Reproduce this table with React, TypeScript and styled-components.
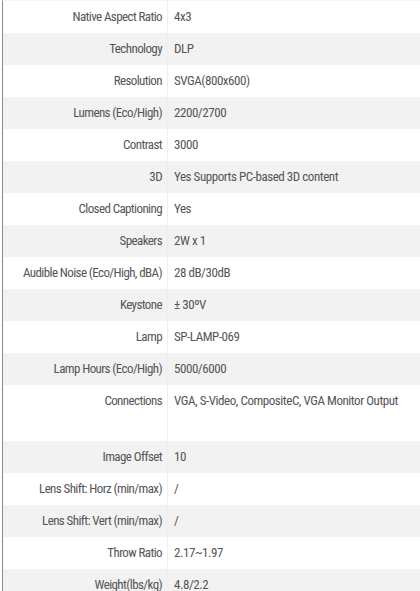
import React from "react";
import styled, { createGlobalStyle } from "styled-components";

const GlobalStyle = createGlobalStyle`
  body {
    margin: 0;
    background: #ffffff;
  }
`;

const specs: [string, string][] = [
  ["Native Aspect Ratio", "4x3"],
  ["Technology", "DLP"],
  ["Resolution", "SVGA(800x600)"],
  ["Lumens (Eco/High)", "2200/2700"],
  ["Contrast", "3000"],
  ["3D", "Yes Supports PC-based 3D content"],
  ["Closed Captioning", "Yes"],
  ["Speakers", "2W x 1"],
  ["Audible Noise (Eco/High, dBA)", "28 dB/30dB"],
  ["Keystone", "± 30ºV"],
  ["Lamp", "SP-LAMP-069"],
  ["Lamp Hours (Eco/High)", "5000/6000"],
  ["Connections", "VGA, S-Video, CompositeC, VGA Monitor Output"],
  ["Image Offset", "10"],
  ["Lens Shift: Horz (min/max)", "/"],
  ["Lens Shift: Vert (min/max)", "/"],
  ["Throw Ratio", "2.17~1.97"],
  ["Weight(lbs/kg)", "4.8/2.2"],
];

// no narrow face installed, so Roboto is tightened to the condensed widths
const Panel = styled.div`
  margin-left: 2px;
  border-left: 1px solid #8a8a8a;
  border-top: 1px solid #f4f4f4;
  font-family: "Roboto Condensed", Roboto, "Liberation Sans", sans-serif;
  font-size: 13px;
  color: #555555;
`;

const Row = styled.div<{ $shaded: boolean; $tall?: boolean }>`
  display: grid;
  grid-template-columns: 165px 1fr;
  height: ${(p) => (p.$tall ? 56 : 32)}px;
  background: ${(p) => (p.$shaded ? "#f2f2f2" : "#ffffff")};
`;

const Label = styled.div`
  border-right: 1px solid #eeeeee;
  text-align: right;
  padding: 8px 5px 0 0;
  line-height: 16px;
  letter-spacing: -0.6px;
  white-space: nowrap;
`;

const Value = styled.div`
  padding: 8px 0 0 6px;
  line-height: 16px;
  letter-spacing: -0.45px;
  white-space: nowrap;
`;

export default function App() {
  return (
    <>
      <GlobalStyle />
      <Panel>
        {specs.map(([label, value], i) => (
          <Row key={label} $shaded={i % 2 === 1} $tall={label === "Connections"}>
            <Label>{label}</Label>
            <Value>{value}</Value>
          </Row>
        ))}
      </Panel>
    </>
  );
}
